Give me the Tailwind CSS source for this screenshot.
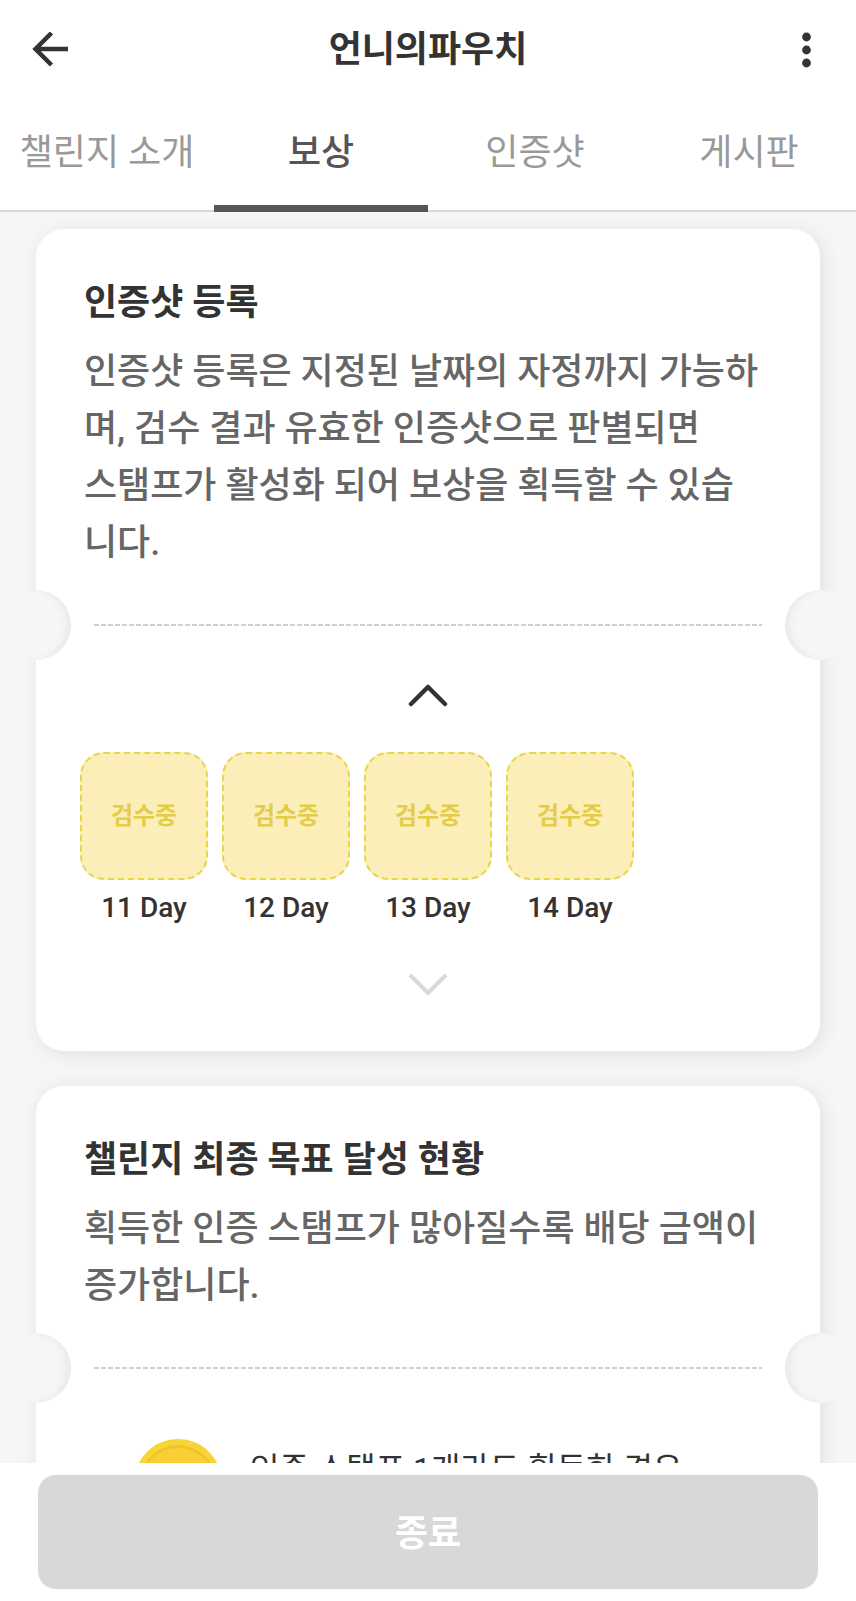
<!DOCTYPE html>
<html lang="ko">
<head>
    <meta charset="UTF-8">
    <meta name="viewport" content="width=device-width, initial-scale=1.0">
    <title>언니의파우치</title>
    <script src="https://cdn.jsdelivr.net/npm/@tailwindcss/browser@4"></script>
</head>
<body class="bg-white text-[#333333] font-[Roboto,'Noto_Sans_CJK_KR',sans-serif]">
    <div class="flex h-screen flex-col">
        <!-- Header -->
        <header class="grid h-24 shrink-0 grid-cols-[40px_1fr_40px] items-center px-7 pt-1">
            <button type="button" aria-label="뒤로" class="p-1">
                <svg class="size-9" viewBox="0 0 36 36" fill="none" stroke="#333333" stroke-width="4.5">
                    <path d="M19.5 1 3.5 17l16 16M4 17h32"/>
                </svg>
            </button>
            <h1 class="text-center text-[36px] leading-[57px] font-bold">언니의파우치</h1>
            <button type="button" aria-label="더보기" class="flex justify-center">
                <svg class="h-10 w-3" viewBox="0 0 12 40" fill="#333333">
                    <circle cx="4.5" cy="7" r="4.4"/>
                    <circle cx="4.5" cy="20" r="4.4"/>
                    <circle cx="4.5" cy="33" r="4.4"/>
                </svg>
            </button>
        </header>

        <!-- Tabs -->
        <nav class="grid h-29 shrink-0 grid-cols-4 border-b-2 border-[#d8d8d8] text-[36px] leading-[57px] text-[#999999]">
            <button type="button" class="-mb-0.5 border-b-[7px] border-transparent pt-1.5">챌린지 소개</button>
            <button type="button" class="-mb-0.5 border-b-[7px] border-[#5a5355] pt-1.5 font-medium text-[#5a5355]">보상</button>
            <button type="button" class="-mb-0.5 border-b-[7px] border-transparent pt-1.5">인증샷</button>
            <button type="button" class="-mb-0.5 border-b-[7px] border-transparent pt-1.5">게시판</button>
        </nav>

        <main class="flex min-h-0 flex-1 flex-col gap-[35px] overflow-hidden bg-[#f6f6f6] px-9 pt-[17px]">
            <!-- Stamp card -->
            <section class="shrink-0 rounded-[28px] bg-white pt-[46px] pb-[54px] shadow-[3px_3px_20px_rgba(0,0,0,0.09)]">
                <div class="pr-14 pl-12">
                    <h2 class="text-[36px] leading-[57px] font-bold">인증샷 등록</h2>
                    <p class="mt-3 text-[36px] leading-[57px] font-medium text-[#666666]">인증샷 등록은 지정된 날짜의 자정까지 가능하며, 검수 결과 유효한 인증샷으로 판별되면<br>스탬프가 활성화 되어 보상을 획득할 수 있습니다.</p>
                </div>

                <div class="relative mt-[18px] flex h-[70px] items-center px-[58px]">
                    <span class="absolute top-0 -left-[35px] size-[70px] rounded-full bg-[#f6f6f6] shadow-[inset_-7px_0_8px_-3px_rgba(0,0,0,0.06)]"></span>
                    <div class="h-0.5 w-full bg-[repeating-linear-gradient(90deg,#d0d0d0_0_5px,transparent_5px_7px)]"></div>
                    <span class="absolute top-0 -right-[35px] size-[70px] rounded-full bg-[#f6f6f6] shadow-[inset_7px_0_8px_-3px_rgba(0,0,0,0.06)]"></span>
                </div>

                <button type="button" aria-label="이전" class="mx-auto mt-6 block">
                    <svg class="h-6 w-10" viewBox="0 0 40 24" fill="none" stroke="#333333" stroke-width="4.5" stroke-linecap="round" stroke-linejoin="round">
                        <path d="M3 20 20 3l17 17"/>
                    </svg>
                </button>

                <ul class="mt-11 grid grid-cols-5 gap-3.5 px-11 text-center">
                    <li>
                        <div class="flex aspect-square items-center justify-center rounded-3xl border-2 border-dashed border-[#e6d648] bg-[#fceeb8] text-[24px] font-bold text-[#e3cd48]">검수중</div>
                        <p class="mt-2 text-[28px] leading-10 font-medium">11 Day</p>
                    </li>
                    <li>
                        <div class="flex aspect-square items-center justify-center rounded-3xl border-2 border-dashed border-[#e6d648] bg-[#fceeb8] text-[24px] font-bold text-[#e3cd48]">검수중</div>
                        <p class="mt-2 text-[28px] leading-10 font-medium">12 Day</p>
                    </li>
                    <li>
                        <div class="flex aspect-square items-center justify-center rounded-3xl border-2 border-dashed border-[#e6d648] bg-[#fceeb8] text-[24px] font-bold text-[#e3cd48]">검수중</div>
                        <p class="mt-2 text-[28px] leading-10 font-medium">13 Day</p>
                    </li>
                    <li>
                        <div class="flex aspect-square items-center justify-center rounded-3xl border-2 border-dashed border-[#e6d648] bg-[#fceeb8] text-[24px] font-bold text-[#e3cd48]">검수중</div>
                        <p class="mt-2 text-[28px] leading-10 font-medium">14 Day</p>
                    </li>
                </ul>

                <button type="button" aria-label="다음" class="mx-auto mt-[45px] block">
                    <svg class="h-6 w-10" viewBox="0 0 40 24" fill="none" stroke="#d8d8d8" stroke-width="4">
                        <path d="M2 2l18 18L38 2"/>
                    </svg>
                </button>
            </section>

            <!-- Goal card -->
            <section class="shrink-0 rounded-[28px] bg-white pt-[46px] pb-[54px] shadow-[3px_3px_20px_rgba(0,0,0,0.09)]">
                <div class="pr-14 pl-12">
                    <h2 class="text-[36px] leading-[57px] font-bold">챌린지 최종 목표 달성 현황</h2>
                    <p class="mt-3 text-[36px] leading-[57px] font-medium text-[#666666]">획득한 인증 스탬프가 많아질수록 배당 금액이<br>증가합니다.</p>
                </div>

                <div class="relative mt-[18px] flex h-[70px] items-center px-[58px]">
                    <span class="absolute top-0 -left-[35px] size-[70px] rounded-full bg-[#f6f6f6] shadow-[inset_-7px_0_8px_-3px_rgba(0,0,0,0.06)]"></span>
                    <div class="h-0.5 w-full bg-[repeating-linear-gradient(90deg,#d0d0d0_0_5px,transparent_5px_7px)]"></div>
                    <span class="absolute top-0 -right-[35px] size-[70px] rounded-full bg-[#f6f6f6] shadow-[inset_7px_0_8px_-3px_rgba(0,0,0,0.06)]"></span>
                </div>

                <div class="mt-9 flex items-start gap-7 pl-[98px]">
                    <svg class="size-[88px] shrink-0" viewBox="0 0 88 88">
                        <circle cx="44" cy="44" r="44" fill="#f6d636"/>
                        <circle cx="44" cy="44" r="38" fill="#efc22f"/>
                        <circle cx="44" cy="47" r="38" fill="#f9cf38"/>
                        <circle cx="44" cy="44" r="20" fill="#fbe58a"/>
                    </svg>
                    <p class="pt-1.5 text-[32px] leading-[48px]">인증 스탬프 1개라도 획득한 경우</p>
                </div>
            </section>
        </main>

        <footer class="shrink-0 bg-white px-[38px] py-3">
            <button type="button" class="h-[114px] w-full rounded-[18px] bg-[#d8d8d8] pt-1 text-[36px] font-bold text-white">종료</button>
        </footer>
    </div>
</body>
</html>
